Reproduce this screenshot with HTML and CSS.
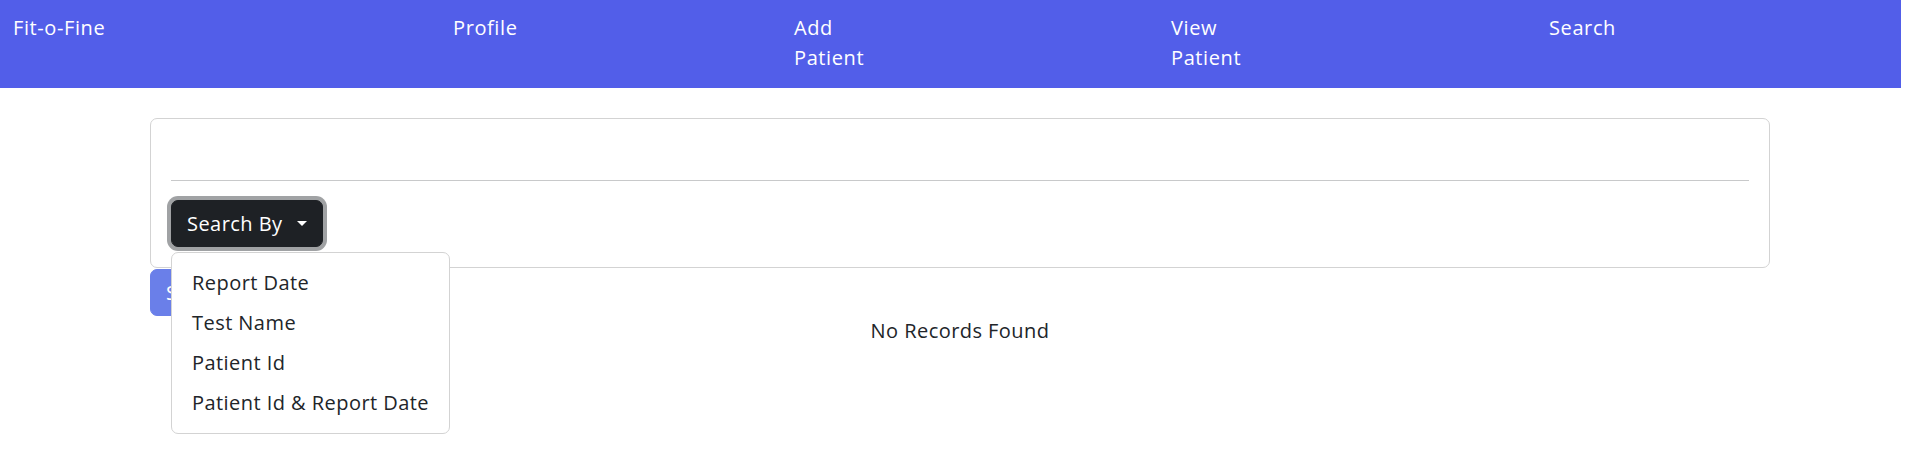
FILE: index.html
```html
<!DOCTYPE html>
<html lang="en">
<head>
<meta charset="utf-8">
<title>Fit-o-Fine</title>
<link rel="stylesheet" href="styles.css">
</head>
<body>
<nav class="navbar">
  <ul class="nav-list">
    <li class="nav-item"><a class="nav-link">Fit-o-Fine</a></li>
    <li class="nav-item"><a class="nav-link">Profile</a></li>
    <li class="nav-item"><a class="nav-link">Add Patient</a></li>
    <li class="nav-item"><a class="nav-link">View Patient</a></li>
    <li class="nav-item"><a class="nav-link">Search</a></li>
  </ul>
</nav>
<main class="container">
  <div class="card">
    <div class="card-body">
      <div class="spacer"></div>
      <hr class="divider">
      <div class="dropdown">
        <button class="btn btn-dark is-focused" type="button">Search By<span class="caret"></span></button>
        <ul class="dropdown-menu">
          <li><a class="dropdown-item">Report Date</a></li>
          <li><a class="dropdown-item">Test Name</a></li>
          <li><a class="dropdown-item">Patient Id</a></li>
          <li><a class="dropdown-item">Patient Id &amp; Report Date</a></li>
        </ul>
      </div>
    </div>
  </div>
  <button class="btn btn-primary" type="button">Search</button>
  <p class="empty">No Records Found</p>
</main>
</body>
</html>
```
FILE: styles.css
```css
html {
  font-size: 20px;
  min-height: 100%;
}
body {
  margin: 0;
  min-height: 459px;
  font-family: "Open Sans", "Liberation Sans", sans-serif;
  font-size: 20px;
  line-height: 1.5;
  letter-spacing: 0.45px;
  color: #212529;
  background: #fff;
}
.navbar {
  width: 99%;
  height: 88px;
  background: #525ee9;
  box-sizing: border-box;
  padding-top: 13px;
}
.nav-list {
  list-style: none;
  margin: 0;
  padding: 0 0 0 13px;
  display: grid;
  grid-template-columns: 440px 341px 377px 378px auto;
}
.nav-link {
  display: inline-block;
  max-width: 100px;
  color: #fff;
  letter-spacing: 0.6px;
  text-decoration: none;
}
.container {
  max-width: 1650px;
  margin: 30px auto 0;
  padding: 0 15px;
  box-sizing: border-box;
}
.card {
  border: 1px solid #d3d3d3;
  border-radius: 7px;
}
.card-body {
  padding: 20px;
}
.spacer {
  height: 21px;
}
.divider {
  margin: 20px 0 19px;
  border: 0;
  border-top: 1px solid #c8c9ca;
}
.dropdown {
  position: relative;
  display: inline-block;
  vertical-align: top;
}
.btn {
  display: inline-block;
  font-family: inherit;
  font-size: 20px;
  letter-spacing: inherit;
  line-height: 30px;
  padding: 7.5px 15px;
  border: 1px solid transparent;
  border-radius: 7px;
  cursor: pointer;
}
.btn-dark {
  background: #1e2125;
  border-color: #1e2125;
  color: #fff;
}
.is-focused {
  box-shadow: 0 0 0 4px #a0a2a4;
}
.caret {
  display: inline-block;
  margin-left: 14px;
  vertical-align: 5px;
  border-top: 5px solid #fff;
  border-left: 5px solid transparent;
  border-right: 5px solid transparent;
}
.btn-primary {
  display: block;
  margin-top: 1px;
  background: #6a7fe9;
  border-color: #6a7fe9;
  color: #fff;
}
.dropdown-menu {
  position: absolute;
  top: calc(100% + 5px);
  left: 0;
  z-index: 10;
  margin: 0;
  padding: 10px 0;
  list-style: none;
  background: #fff;
  border: 1px solid #d3d3d3;
  border-radius: 7px;
  white-space: nowrap;
}
.dropdown-item {
  display: block;
  padding: 5px 20px;
  color: #212529;
  text-decoration: none;
}
.empty {
  margin: 0;
  text-align: center;
}
```
